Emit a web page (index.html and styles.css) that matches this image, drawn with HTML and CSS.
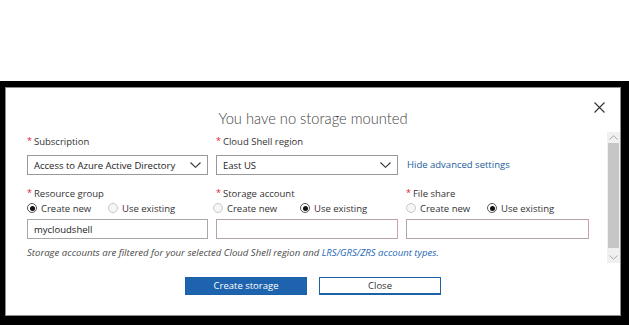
FILE: index.html
```html
<!DOCTYPE html>
<html lang="en">
<head>
<meta charset="utf-8">
<title>Cloud Shell storage</title>
<link rel="stylesheet" href="styles.css">
</head>
<body>
<div class="stage">
  <div class="dialog">
    <button class="close" aria-label="Close">
      <svg width="11" height="11" viewBox="0 0 11 11"><path d="M0.5 0.5 L10.5 10.5 M10.5 0.5 L0.5 10.5" stroke="#333" stroke-width="1.1" fill="none"/></svg>
    </button>
    <div class="scrollbar">
      <span class="arrow">
        <svg width="9" height="5" viewBox="0 0 9 5"><path d="M0.5 4.5 L4.5 0.8 L8.5 4.5" stroke="#a8a8a8" stroke-width="1" fill="none"/></svg>
      </span>
      <span class="thumb"></span>
      <span class="arrow">
        <svg width="9" height="5" viewBox="0 0 9 5"><path d="M0.5 0.5 L4.5 4.2 L8.5 0.5" stroke="#a8a8a8" stroke-width="1" fill="none"/></svg>
      </span>
    </div>

    <h1 class="title">You have no storage mounted</h1>

    <div class="grid">
      <div class="field">
        <div class="label"><span class="req">*</span>Subscription</div>
        <div class="select"><span>Access to Azure Active Directory</span>
          <svg class="chev" width="11" height="6" viewBox="0 0 11 6"><path d="M0.5 0.5 L5.5 5.3 L10.5 0.5" stroke="#333" stroke-width="1.1" fill="none"/></svg>
        </div>
      </div>
      <div class="field">
        <div class="label"><span class="req">*</span>Cloud Shell region</div>
        <div class="select"><span>East US</span>
          <svg class="chev" width="11" height="6" viewBox="0 0 11 6"><path d="M0.5 0.5 L5.5 5.3 L10.5 0.5" stroke="#333" stroke-width="1.1" fill="none"/></svg>
        </div>
      </div>
      <div class="field linkcell">
        <a class="link" href="#">Hide advanced settings</a>
      </div>

      <div class="field row2">
        <div class="label"><span class="req">*</span>Resource group</div>
        <div class="radios">
          <span class="opt first"><span class="radio on"></span>Create new</span>
          <span class="opt"><span class="radio"></span>Use existing</span>
        </div>
        <div class="input">mycloudshell</div>
      </div>
      <div class="field row2">
        <div class="label"><span class="req">*</span>Storage account</div>
        <div class="radios shift">
          <span class="opt first wide"><span class="radio"></span>Create new</span>
          <span class="opt"><span class="radio on"></span>Use existing</span>
        </div>
        <div class="input invalid"></div>
      </div>
      <div class="field row2">
        <div class="label"><span class="req">*</span>File share</div>
        <div class="radios">
          <span class="opt first"><span class="radio"></span>Create new</span>
          <span class="opt"><span class="radio on"></span>Use existing</span>
        </div>
        <div class="input invalid"></div>
      </div>
    </div>

    <p class="note">Storage accounts are filtered for your selected Cloud Shell region and <a class="notelink" href="#">LRS/GRS/ZRS account types.</a></p>

    <div class="buttons">
      <button class="btn primary">Create storage</button>
      <button class="btn secondary">Close</button>
    </div>
  </div>
</div>
</body>
</html>
```

FILE: styles.css
```css
* { box-sizing: border-box; }

html, body {
  margin: 0;
  padding: 0;
  background: #ffffff;
  width: 629px;
  height: 325px;
  overflow: hidden;
  font-family: "Open Sans", "Noto Sans", "Liberation Sans", sans-serif;
}

.stage {
  margin-top: 81px;
  height: 244px;
  background: #000000;
  padding: 6px 8px 0 5px;
}

.dialog {
  position: relative;
  height: 229px;
  background: #ffffff;
  border: 1px solid #8c8c8c;
  padding: 20px 0 0 21px;
}

.close {
  position: absolute;
  top: 14px;
  right: 15px;
  width: 11px;
  height: 11px;
  padding: 0;
  border: 0;
  background: transparent;
  display: flex;
}

.scrollbar {
  position: absolute;
  top: 44px;
  right: 0;
  width: 13px;
  height: 131px;
  background: #f0f0f0;
  display: flex;
  flex-direction: column;
  align-items: center;
}

.scrollbar .arrow {
  height: 11px;
  display: flex;
  align-items: center;
  justify-content: center;
  width: 100%;
}

.scrollbar .thumb {
  flex: 1;
  width: 11px;
  background: #c6c6c6;
  margin: 0 0 4px 0;
}

.title {
  margin: 0 0 6px 0;
  font-family: "Lato", "Open Sans", sans-serif;
  font-size: 14.7px;
  font-weight: 300;
  line-height: 20px;
  color: #444444;
  text-align: center;
  padding-right: 21px;
}

.grid {
  display: grid;
  grid-template-columns: 181px 182px 183px;
  column-gap: 8px;
  row-gap: 11px;
}

.label {
  font-size: 9.5px;
  line-height: 14px;
  color: #333333;
}

.req {
  color: #e3143b;
  margin-right: 2px;
  font-size: 9px;
  vertical-align: 1px;
}

.select {
  margin-top: 6px;
  height: 20px;
  border: 1px solid #999999;
  display: flex;
  align-items: center;
  justify-content: space-between;
  padding: 0 6px 0 6px;
  font-size: 9.5px;
  color: #222222;
}

.chev { margin-right: 0; }

.linkcell {
  display: flex;
  align-items: center;
  padding-top: 20px;
  padding-left: 1px;
}

.link {
  font-size: 9.5px;
  color: #1a5c9a;
  text-decoration: none;
}

.radios {
  display: flex;
  align-items: center;
  height: 14px;
  font-size: 9.5px;
  color: #333333;
}

.radios.shift { margin-left: -3px; }

.opt {
  display: flex;
  align-items: center;
  gap: 4px;
}

.opt.first { width: 81px; }
.opt.first.wide { width: 87px; }

.radio {
  width: 10px;
  height: 10px;
  border-radius: 50%;
  border: 1px solid #c8c8c8;
  background: #f6f6f6;
  display: flex;
  align-items: center;
  justify-content: center;
}

.radio.on {
  border-color: #555555;
  background: #ffffff;
}

.radio.on::after {
  content: "";
  width: 5px;
  height: 5px;
  border-radius: 50%;
  background: #111111;
}

.input {
  margin-top: 4px;
  height: 20px;
  border: 1px solid #a8a8a8;
  padding: 0 6px;
  display: flex;
  align-items: center;
  font-size: 9.5px;
  color: #222222;
}

.input.invalid {
  border-color: #b5a4a6;
  border-right-color: #d4a0a6;
}

.note {
  margin: 7px 0 0 0;
  font-size: 9.6px;
  line-height: 14px;
  font-style: italic;
  color: #4a4a4a;
}

.notelink {
  color: #2467b5;
  text-decoration: none;
}

.buttons {
  display: flex;
  justify-content: center;
  gap: 12px;
  margin-top: 17px;
  padding-right: 21px;
}

.btn {
  width: 122px;
  height: 18px;
  font-family: inherit;
  font-size: 9.5px;
  padding: 0;
  border: 1px solid #1a5fa8;
  line-height: 16px;
}

.btn.primary {
  background: #1d63ae;
  color: #ffffff;
}

.btn.secondary {
  background: #ffffff;
  color: #333333;
  border-color: #1e62a6;
  border-width: 1px 1px 2px 1px;
}
```
